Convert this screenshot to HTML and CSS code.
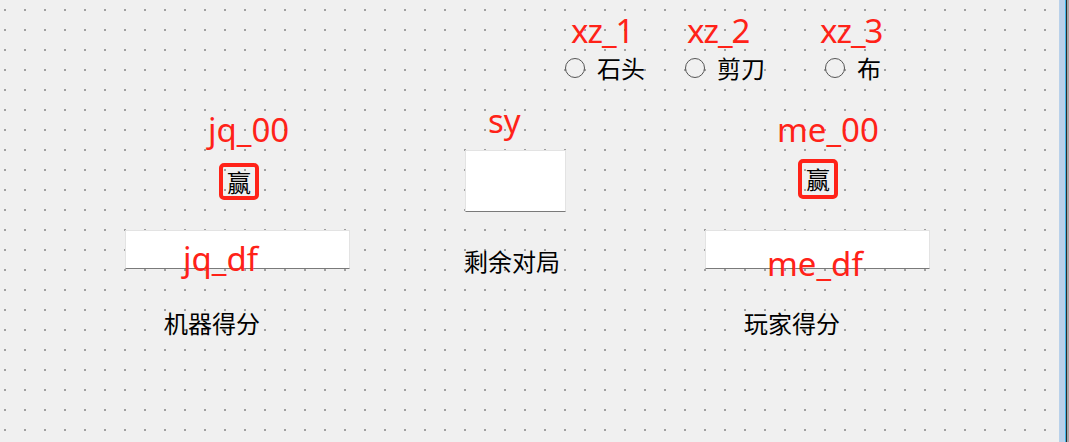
FILE: index.html
```html
<!DOCTYPE html>
<html lang="zh">
<head>
<meta charset="utf-8">
<title>Form</title>
<link rel="stylesheet" href="styles.css">
</head>
<body>
<div class="designer">
  <div class="canvas">
    <div class="widget radio r1"><span class="dot"></span><span class="cn">石头</span></div>
    <div class="widget radio r2"><span class="dot"></span><span class="cn">剪刀</span></div>
    <div class="widget radio r3"><span class="dot"></span><span class="cn">布</span></div>

    <div class="widget win w-jq"><span class="cn">赢</span></div>
    <div class="widget win w-me"><span class="cn">赢</span></div>

    <div class="widget field f-sy"></div>
    <div class="widget field f-jq"></div>
    <div class="widget field f-me"></div>

    <div class="widget cn lab l-sy">剩余对局</div>
    <div class="widget cn lab l-jq">机器得分</div>
    <div class="widget cn lab l-me">玩家得分</div>

    <div class="widget tag t-xz1">xz_1</div>
    <div class="widget tag t-xz2">xz_2</div>
    <div class="widget tag t-xz3">xz_3</div>
    <div class="widget tag t-jq00">jq_00</div>
    <div class="widget tag t-sy">sy</div>
    <div class="widget tag t-me00">me_00</div>
    <div class="widget tag t-jqdf">jq_df</div>
    <div class="widget tag t-medf">me_df</div>
  </div>
  <div class="frame-edge"></div>
</div>
</body>
</html>
```
FILE: styles.css
```css
html, body {
  margin: 0;
  padding: 0;
}
body {
  width: 1069px;
  height: 442px;
  overflow: hidden;
  background: #f0f0f0;
  font-family: "Noto Sans CJK SC", sans-serif;
}
.designer {
  display: flex;
  height: 442px;
}
.canvas {
  position: relative;
  flex: 1;
  background-color: #f0f0f0;
  background-image: conic-gradient(from 0deg at 2px 2px, transparent 75%, #a0a0a0 0);
  background-size: 20px 20px;
  background-position: 4px 9px;
}
.frame-edge {
  width: 10px;
  flex: none;
  background: linear-gradient(to right, #b9d1ea 0, #b9d1ea 6px, #3fb6e8 6px, #3fb6e8 7px, #2b2b2b 7px, #2b2b2b 8px, #a8a8a8 8px);
}

/* widgets placed on the form canvas (designer geometry) */
.widget {
  position: absolute;
}
.cn {
  font-family: "Noto Sans CJK SC", sans-serif;
  font-size: 24px;
  line-height: 24px;
  color: #000;
}

.radio {
  display: flex;
  align-items: center;
  gap: 12px;
  top: 56px;
}
.radio .dot {
  width: 18px;
  height: 18px;
  border: 1px solid #555;
  border-radius: 50%;
  box-sizing: content-box;
}
.r1 { left: 565px; }
.r2 { left: 685px; }
.r3 { left: 825px; }

.win {
  width: 32px;
  height: 29px;
  border: 4px solid #ff2218;
  border-radius: 5px;
  display: flex;
  align-items: center;
  justify-content: center;
}
.w-jq { left: 219px; top: 163px; }
.w-me { left: 798px; top: 159px; width: 32px; height: 32px; }

.field {
  background: #fff;
  border: 1px solid #e3e3e3;
  border-bottom-color: #7a7a7a;
  box-sizing: border-box;
}
.f-sy { left: 465px; top: 150px; width: 101px; height: 62px; }
.f-jq { left: 125px; top: 230px; width: 225px; height: 39px; }
.f-me { left: 705px; top: 230px; width: 225px; height: 39px; }

.l-sy { left: 464px; top: 249px; }
.l-jq { left: 164px; top: 311px; }
.l-me { left: 744px; top: 311px; }

.tag {
  font-family: "Noto Sans", sans-serif;
  font-size: 33px;
  line-height: 33px;
  color: #ff2218;
  white-space: nowrap;
}
.t-xz1 { left: 571px; top: 14px; letter-spacing: -1px; }
.t-xz2 { left: 687px; top: 14px; letter-spacing: -1px; }
.t-xz3 { left: 820px; top: 14px; letter-spacing: -1px; }
.t-jq00 { left: 208px; top: 113px; }
.t-me00 { left: 777px; top: 113px; }
.t-sy { left: 488px; top: 104px; }
.t-jqdf { left: 183px; top: 242px; }
.t-medf { left: 767px; top: 247px; }
```
